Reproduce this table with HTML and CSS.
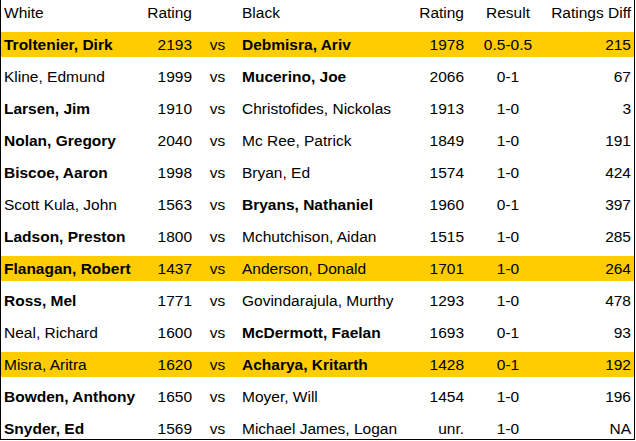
FILE: index.html
```html
<!DOCTYPE html>
<html>
<head>
<meta charset="utf-8">
<link rel="stylesheet" href="styles.css">
</head>
<body>
<div class="table">
  <div class="row head">
    <div class="c name">White</div><div class="c num">Rating</div><div class="c vs"></div><div class="c name2">Black</div><div class="c num2">Rating</div><div class="c res">Result</div><div class="c diff">Ratings Diff</div>
  </div>
  <div class="row hl">
    <div class="c name b">Troltenier, Dirk</div><div class="c num">2193</div><div class="c vs">vs</div><div class="c name2 b">Debmisra, Ariv</div><div class="c num2">1978</div><div class="c res">0.5-0.5</div><div class="c diff">215</div>
  </div>
  <div class="row">
    <div class="c name">Kline, Edmund</div><div class="c num">1999</div><div class="c vs">vs</div><div class="c name2 b">Mucerino, Joe</div><div class="c num2">2066</div><div class="c res">0-1</div><div class="c diff">67</div>
  </div>
  <div class="row">
    <div class="c name b">Larsen, Jim</div><div class="c num">1910</div><div class="c vs">vs</div><div class="c name2">Christofides, Nickolas</div><div class="c num2">1913</div><div class="c res">1-0</div><div class="c diff">3</div>
  </div>
  <div class="row">
    <div class="c name b">Nolan, Gregory</div><div class="c num">2040</div><div class="c vs">vs</div><div class="c name2">Mc Ree, Patrick</div><div class="c num2">1849</div><div class="c res">1-0</div><div class="c diff">191</div>
  </div>
  <div class="row">
    <div class="c name b">Biscoe, Aaron</div><div class="c num">1998</div><div class="c vs">vs</div><div class="c name2">Bryan, Ed</div><div class="c num2">1574</div><div class="c res">1-0</div><div class="c diff">424</div>
  </div>
  <div class="row">
    <div class="c name">Scott Kula, John</div><div class="c num">1563</div><div class="c vs">vs</div><div class="c name2 b">Bryans, Nathaniel</div><div class="c num2">1960</div><div class="c res">0-1</div><div class="c diff">397</div>
  </div>
  <div class="row">
    <div class="c name b">Ladson, Preston</div><div class="c num">1800</div><div class="c vs">vs</div><div class="c name2">Mchutchison, Aidan</div><div class="c num2">1515</div><div class="c res">1-0</div><div class="c diff">285</div>
  </div>
  <div class="row hl">
    <div class="c name b">Flanagan, Robert</div><div class="c num">1437</div><div class="c vs">vs</div><div class="c name2">Anderson, Donald</div><div class="c num2">1701</div><div class="c res">1-0</div><div class="c diff">264</div>
  </div>
  <div class="row">
    <div class="c name b">Ross, Mel</div><div class="c num">1771</div><div class="c vs">vs</div><div class="c name2">Govindarajula, Murthy</div><div class="c num2">1293</div><div class="c res">1-0</div><div class="c diff">478</div>
  </div>
  <div class="row">
    <div class="c name">Neal, Richard</div><div class="c num">1600</div><div class="c vs">vs</div><div class="c name2 b">McDermott, Faelan</div><div class="c num2">1693</div><div class="c res">0-1</div><div class="c diff">93</div>
  </div>
  <div class="row hl">
    <div class="c name">Misra, Aritra</div><div class="c num">1620</div><div class="c vs">vs</div><div class="c name2 b">Acharya, Kritarth</div><div class="c num2">1428</div><div class="c res">0-1</div><div class="c diff">192</div>
  </div>
  <div class="row">
    <div class="c name b">Bowden, Anthony</div><div class="c num">1650</div><div class="c vs">vs</div><div class="c name2">Moyer, Will</div><div class="c num2">1454</div><div class="c res">1-0</div><div class="c diff">196</div>
  </div>
  <div class="row">
    <div class="c name b">Snyder, Ed</div><div class="c num">1569</div><div class="c vs">vs</div><div class="c name2">Michael James, Logan</div><div class="c num2">unr.</div><div class="c res">1-0</div><div class="c diff">NA</div>
  </div>
</div>
</body>
</html>
```

FILE: styles.css
```css
html, body {
  margin: 0;
  padding: 0;
  background: #fff;
}
.table {
  width: 633px;
  height: 439px;
  overflow: hidden;
  border: 1px solid #000;
  border-top: none;
  display: flex;
  flex-direction: column;
  gap: 7px;
  font-family: "Liberation Sans", Arial, sans-serif;
  font-size: 15.5px;
  color: #000;
}
.row {
  display: grid;
  grid-template-columns: 140px 52px 49px 158px 65px 86px 83px;
  height: 25px;
  flex: none;
  line-height: 25px;
}
.row.hl {
  background: #ffcc00;
}
.c {
  white-space: nowrap;
  overflow: visible;
}
.b { font-weight: bold; }
.name { padding-left: 3px; }
.num { text-align: right; padding-right: 1px; }
.vs { text-align: center; }
.name2 { padding-left: 0; }
.num2 { text-align: right; padding-right: 1px; }
.res { text-align: center; }
.diff { text-align: right; padding-right: 3px; }
```
